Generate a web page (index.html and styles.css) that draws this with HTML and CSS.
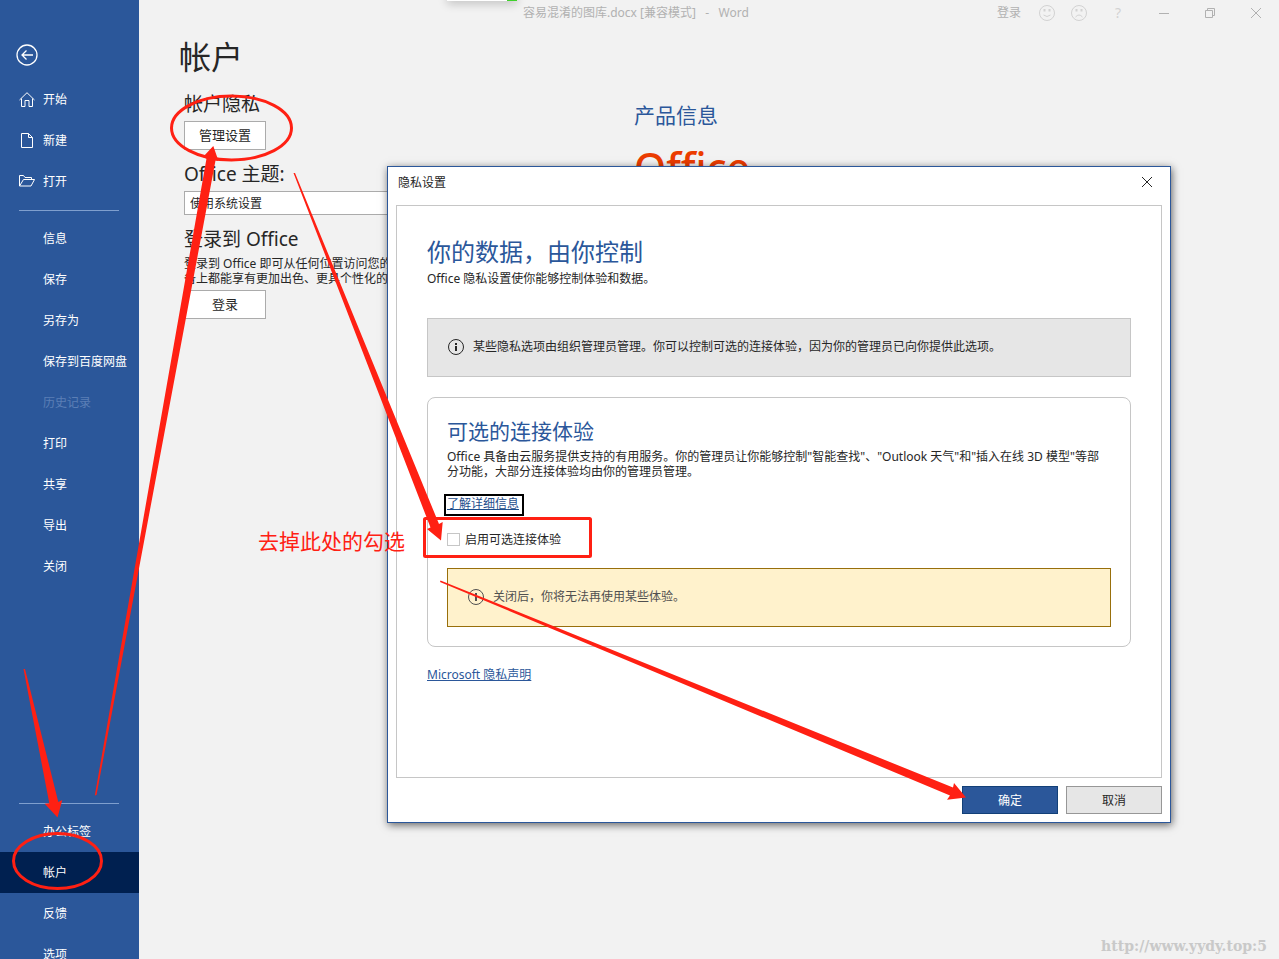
FILE: index.html
```html
<!DOCTYPE html>
<html lang="zh-CN">
<head>
  <meta charset="UTF-8">
  <meta name="viewport" content="width=device-width, initial-scale=1">
  <title>帐户 - Word</title>
  <link rel="stylesheet" href="styles.css">
</head>
<body>
  <div class="app">
    <nav class="sidebar">
      <button class="back" aria-label="返回">
        <svg width="22" height="22" viewBox="0 0 22 22"><circle cx="11" cy="11" r="10"/><path d="M17 11H6M10.500 6.500L6 11l4.500 4.500"/></svg>
      </button>
      <a href="#"><svg width="16" height="16" viewBox="0 0 16 16"><path d="M.5 8L8 .7 15.500 8M2.500 6.500v8h3.500v-6h4v6h3.500v-8"/></svg>开始</a>
      <a href="#"><svg width="16" height="16" viewBox="0 0 16 16"><path d="M2.500.5h7l4 4v10h-11zM9.500.5v4h4"/></svg>新建</a>
      <a href="#"><svg width="16" height="16" viewBox="0 0 16 16"><path d="M.5 12V1.500h4l1.500 2h6.500v2M.5 12l4-6.500h11L12 12z"/></svg>打开</a>
      <hr>
      <a href="#">信息</a>
      <a href="#">保存</a>
      <a href="#">另存为</a>
      <a href="#">保存到百度网盘</a>
      <a href="#" class="disabled">历史记录</a>
      <a href="#">打印</a>
      <a href="#">共享</a>
      <a href="#">导出</a>
      <a href="#">关闭</a>
      <div class="sidebar-bottom">
        <hr>
        <a href="#">办公标签</a>
        <a href="#" class="active">帐户</a>
        <a href="#">反馈</a>
        <a href="#">选项</a>
      </div>
    </nav>

    <main>
      <header class="titlebar">
        <span class="doc-title">容易混淆的图库.docx [兼容模式]&nbsp;&nbsp; -&nbsp;&nbsp; Word</span>
        <div class="window-buttons">
          <button class="signin">登录</button>
          <button class="face" aria-label="微笑"><svg width="18" height="18" viewBox="0 0 18 18"><circle cx="9" cy="9" r="7.500"/><path d="M6.500 5v2.500M11.500 5v2.500" stroke-width="2"/><path d="M5.500 11q3.500 3 7 0"/></svg></button>
          <button class="face" aria-label="哭脸"><svg width="18" height="18" viewBox="0 0 18 18"><circle cx="9" cy="9" r="7.500"/><path d="M6.500 5v2.500M11.500 5v2.500" stroke-width="2"/><path d="M5.500 13q3.500-4 7 0"/></svg></button>
          <button class="help" aria-label="帮助">?</button>
          <button class="win" aria-label="最小化"><svg width="12" height="12" viewBox="0 0 12 12"><path d="M1 6.500h10"/></svg></button>
          <button class="win" aria-label="还原"><svg width="12" height="12" viewBox="0 0 12 12"><path d="M1.500 3.500h7v7h-7zM3.500 3.500v-2h7v7h-2"/></svg></button>
          <button class="win" aria-label="关闭"><svg width="12" height="12" viewBox="0 0 12 12"><path d="M1 1l10 10M11 1L1 11"/></svg></button>
        </div>
      </header>

      <h1>帐户</h1>
      <div class="columns">
        <section class="account">
          <h2>帐户隐私</h2>
          <button class="btn">管理设置</button>
          <h2><label for="theme">Office 主题:</label></h2>
          <select id="theme"><option>使用系统设置</option></select>
          <h2>登录到 Office</h2>
          <p>登录到 Office 即可从任何位置访问您的<br>备上都能享有更加出色、更具个性化的</p>
          <button class="btn">登录</button>
        </section>
        <section class="product">
          <h2>产品信息</h2>
          <div class="office-logo">Office</div>
        </section>
      </div>

      <div class="dialog" role="dialog" aria-labelledby="dialog-title">
        <div class="dialog-title">
          <span id="dialog-title">隐私设置</span>
          <button aria-label="关闭"><svg width="12" height="12" viewBox="0 0 12 12"><path d="M1 1l10 10M11 1L1 11"/></svg></button>
        </div>
        <div class="panel">
          <h2>你的数据，由你控制</h2>
          <p>Office 隐私设置使你能够控制体验和数据。</p>
          <div class="notice">
            <svg width="18" height="18" viewBox="0 0 18 18"><circle cx="9" cy="9" r="7.500"/><path d="M9 8v5M9 5v2" stroke-width="2"/></svg>
            某些隐私选项由组织管理员管理。你可以控制可选的连接体验，因为你的管理员已向你提供此选项。
          </div>
          <div class="card">
            <h3>可选的连接体验</h3>
            <p>Office 具备由云服务提供支持的有用服务。你的管理员让你能够控制"智能查找"、"Outlook 天气"和"插入在线 3D 模型"等部<br>分功能，大部分连接体验均由你的管理员管理。</p>
            <a href="#" class="more">了解详细信息</a>
            <label class="check"><input type="checkbox">启用可选连接体验</label>
            <div class="notice warning">
              <svg width="18" height="18" viewBox="0 0 18 18"><circle cx="9" cy="9" r="7.500"/><path d="M9 8v5M9 5v2" stroke-width="2"/></svg>
              关闭后，你将无法再使用某些体验。
            </div>
          </div>
          <a href="#" class="privacy">Microsoft 隐私声明</a>
        </div>
        <div class="dialog-buttons">
          <button class="ok">确定</button>
          <button>取消</button>
        </div>
      </div>
    </main>

    <div class="popup"></div>

    <!-- red marks drawn over the window -->
    <svg class="marks" width="1279" height="959" viewBox="0 0 1279 959">
      <g class="outline">
        <ellipse cx="231.500" cy="128" rx="60" ry="32"/>
        <ellipse cx="57.500" cy="861" rx="44" ry="27.500"/>
        <rect x="424.500" y="518.500" width="166" height="38" rx="1"/>
      </g>
      <path d="M23.500 669L49.300 803.300 44.700 803.700 57.500 817.500 62.300 800 58.300 802 25 669z"/>
      <path d="M94.800 795.500L206.500 158.500 203 157 213.300 146 218.500 161 215.500 160.500 96.500 795z"/>
      <path d="M293.500 173L430.500 527.500 427 529 441 540.500 442.700 522 439 524 295 173z"/>
      <path d="M440 582L950 795.500 947 799.700 966 797.500 954 783 953 787.500 440.500 580.500z"/>
    </svg>
    <div class="note">去掉此处的勾选</div>
    <div class="watermark">http://www.yydy.top:5</div>
  </div>
</body>
</html>
```

FILE: styles.css
```css
* {
  box-sizing: border-box;
}
body {
  margin: 0;
  font-family: "Noto Sans", "Noto Sans CJK SC", sans-serif;
  font-size: 12px;
  line-height: 15px;
  color: #262626;
  background: #f2f2f2;
}
h1, h2, h3, p {
  margin: 0;
  font-weight: normal;
}
button, select, input {
  font: inherit;
  color: inherit;
  margin: 0;
}
button {
  padding: 0;
  border: none;
  background: none;
}
svg {
  fill: none;
  stroke: currentColor;
}
.app {
  position: relative;
  display: flex;
  height: 100vh;
  overflow: hidden;
}

/* Sidebar */
.sidebar {
  width: 139px;
  flex-shrink: 0;
  display: flex;
  flex-direction: column;
  background: #2b579a;
  color: #fff;
}
.back {
  width: 22px;
  height: 22px;
  margin: 44px 0 13px 16px;
  flex-shrink: 0;
}
.back svg {
  display: block;
  stroke-width: 1.3;
}
.sidebar a {
  position: relative;
  display: flex;
  align-items: center;
  flex-shrink: 0;
  height: 41px;
  padding-left: 43px;
  color: #fff;
  text-decoration: none;
  white-space: nowrap;
}
.sidebar a svg {
  margin-left: -24px;
  margin-right: 8px;
}
.sidebar a.disabled {
  color: #5b7fb6;
}
.sidebar a.active {
  background: #002050;
}
.sidebar hr {
  width: 100px;
  height: 1px;
  margin: 8px 0 7px 19px;
  border: none;
  flex-shrink: 0;
  background: #7f9fce;
}
.sidebar-bottom {
  margin-top: auto;
  margin-bottom: -16px;
}

/* Title bar */
main {
  position: relative;
  flex: 1;
  min-width: 0;
}
.titlebar {
  display: flex;
  justify-content: space-between;
  height: 25px;
  padding-left: 384px;
  line-height: 25px;
  color: #b1b1b1;
  white-space: nowrap;
}
.window-buttons {
  display: flex;
  align-items: center;
}
.window-buttons svg {
  display: block;
  margin: auto;
}
.signin {
  margin-right: 10px;
}
.face {
  width: 32px;
  color: #d2d2d2;
}
.help {
  width: 46px;
  color: #d2d2d2;
  font-size: 14px;
}
.win {
  width: 46px;
}

/* Account page */
h1 {
  margin: 10px 0 13px 40px;
  font-size: 32px;
  line-height: 44px;
}
.columns {
  display: flex;
  padding-left: 45px;
}
.account {
  width: 450px;
}
.account h2 {
  margin-bottom: 5px;
  font-size: 19px;
  line-height: 24px;
}
.account p {
  margin-bottom: 4px;
}
.btn {
  display: block;
  width: 82px;
  height: 29px;
  margin-bottom: 12px;
  border: 1px solid #ababab;
  background: #fff;
  font-size: 13px;
}
select {
  display: block;
  width: 300px;
  height: 24px;
  margin-bottom: 12px;
  padding: 0 5px;
  border: 1px solid #ababab;
  background: #fff;
  appearance: none;
}
.product h2 {
  margin-top: 9px;
  font-size: 21px;
  line-height: 28px;
  color: #2b579a;
}
.office-logo {
  margin-top: 10px;
  font-size: 41px;
  line-height: 56px;
  font-weight: 500;
  color: #eb3c00;
}

/* Privacy dialog */
.dialog {
  position: absolute;
  top: 166px;
  right: 108px;
  bottom: 136px;
  left: 248px;
  display: flex;
  flex-direction: column;
  padding: 0 8px 8px;
  border: 1px solid #2b579a;
  background: #fff;
  box-shadow: 1px 2px 8px rgba(0, 0, 0, 0.6);
}
.dialog-title {
  display: flex;
  justify-content: space-between;
  align-items: center;
  height: 30px;
  margin-bottom: 8px;
  padding-left: 2px;
}
.dialog-title button {
  width: 30px;
  height: 30px;
}
.dialog-title svg {
  display: block;
  margin: auto;
}
.panel {
  flex: 1;
  padding: 30px;
  border: 1px solid #c6c6c6;
}
.panel h2 {
  font-size: 24px;
  line-height: 32px;
  color: #2b579a;
}
.panel > p {
  margin: 3px 0 32px;
}
.notice {
  display: flex;
  align-items: center;
  gap: 8px;
  height: 59px;
  padding: 0 19px 2px;
  border: 1px solid #c6c6c6;
  background: #e6e6e6;
}
.card {
  display: flex;
  flex-direction: column;
  align-items: flex-start;
  margin: 20px 0;
  padding: 19px;
  border: 1px solid #c6c6c6;
  border-radius: 8px;
}
.card h3 {
  margin-bottom: 4px;
  font-size: 21px;
  line-height: 28px;
  color: #2b579a;
}
.card p {
  white-space: nowrap;
}
.more {
  margin: 15px 0 16px -3px;
  padding: 0 3px 3px 1px;
  border: 2px solid #000;
  color: #1f4e8c;
}
.check {
  display: flex;
  align-items: center;
  gap: 5px;
}
.check input {
  appearance: none;
  width: 13px;
  height: 13px;
  border: 1px solid #c6c6c6;
  background: #fff;
}
.warning {
  align-self: stretch;
  margin-top: 21px;
  border-color: #986f0b;
  background: #fff2cc;
  color: #505050;
}
.privacy {
  color: #2b579a;
}
.dialog-buttons {
  display: flex;
  justify-content: flex-end;
  gap: 8px;
  margin-top: 8px;
}
.dialog-buttons button {
  width: 96px;
  height: 28px;
  border: 1px solid #979797;
  background: #e6e6e6;
}
.dialog-buttons .ok {
  border-color: #124078;
  background: #2b579a;
  color: #fff;
}

/* Things lying over the window */
.popup {
  position: absolute;
  top: -9px;
  left: 447px;
  width: 70px;
  height: 10px;
  background: linear-gradient(90deg, #fff 60px, #3fd12b 60px);
  box-shadow: 0 3px 10px rgba(0, 0, 0, 0.2);
}
.marks {
  position: absolute;
  top: 0;
  left: 0;
  fill: #ff2013;
  stroke: none;
  pointer-events: none;
}
.outline {
  fill: none;
  stroke: #ff2013;
  stroke-width: 3;
}
.note {
  position: absolute;
  top: 527px;
  left: 258px;
  font-size: 21px;
  line-height: 28px;
  color: #ff2013;
}
.watermark {
  position: absolute;
  right: 12px;
  bottom: 4px;
  font-family: "DejaVu Serif", serif;
  font-size: 14px;
  line-height: 18px;
  font-weight: bold;
  color: #c9c9c9;
}
```
